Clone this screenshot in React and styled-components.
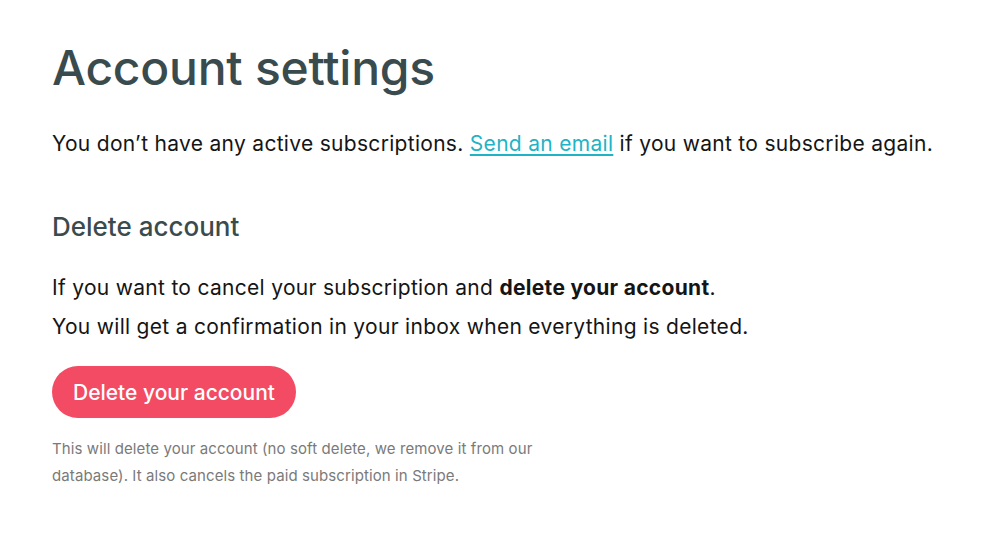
import React from 'react'
import styled, {createGlobalStyle} from 'styled-components'

const GlobalStyle = createGlobalStyle`
  body {
    margin: 0;
    background: #ffffff;
    font-family: Inter, "Noto Sans", sans-serif;
  }
`

const Page = styled.div`
  padding: 38px 52px 0;
  color: #111;
`

const Title = styled.h1`
  margin: 0;
  font-size: 48px;
  font-weight: 500;
  letter-spacing: -0.25px;
  line-height: 60px;
  color: #3a4b4e;
`

const Text = styled.p`
  margin: ${props => props.top || 0}px 0 0;
  font-size: 21px;
  letter-spacing: 0.3px;
  line-height: 39px;
  color: #151515;
`

const MailLink = styled.a`
  color: #1fb3c6;
  text-decoration: underline;
  text-underline-offset: 3px;
  text-decoration-thickness: 1.5px;
`

const Section = styled.h2`
  margin: 49px 0 0;
  font-size: 26px;
  font-weight: 500;
  line-height: 30px;
  color: #3a4b4e;
`

const DangerButton = styled.button`
  margin-top: 20px;
  height: 52px;
  padding: 0 21px;
  border: none;
  border-radius: 26px;
  background: #f24b63;
  color: #fff;
  font-family: Inter, "Noto Sans", sans-serif;
  font-size: 21px;
  font-weight: 500;
  cursor: pointer;
`

const Note = styled.p`
  margin: 17px 0 0;
  max-width: 500px;
  font-size: 15px;
  letter-spacing: 0.1px;
  line-height: 27px;
  color: #7a7a7a;
`

const App = () => {
    return (
        <Page>
            <GlobalStyle/>
            <Title>Account settings</Title>
            <Text top={26}>
                You don’t have any active subscriptions. <MailLink href="#">Send an email</MailLink> if you want to subscribe again.
            </Text>

            <Section>Delete account</Section>
            <Text top={26}>
                If you want to cancel your subscription and <b>delete your account</b>.
            </Text>
            <Text>
                You will get a confirmation in your inbox when everything is deleted.
            </Text>

            <DangerButton>Delete your account</DangerButton>
            <Note>
                This will delete your account (no soft delete, we remove it from our database). It also cancels the paid subscription in Stripe.
            </Note>
        </Page>
    )
}

export default App
